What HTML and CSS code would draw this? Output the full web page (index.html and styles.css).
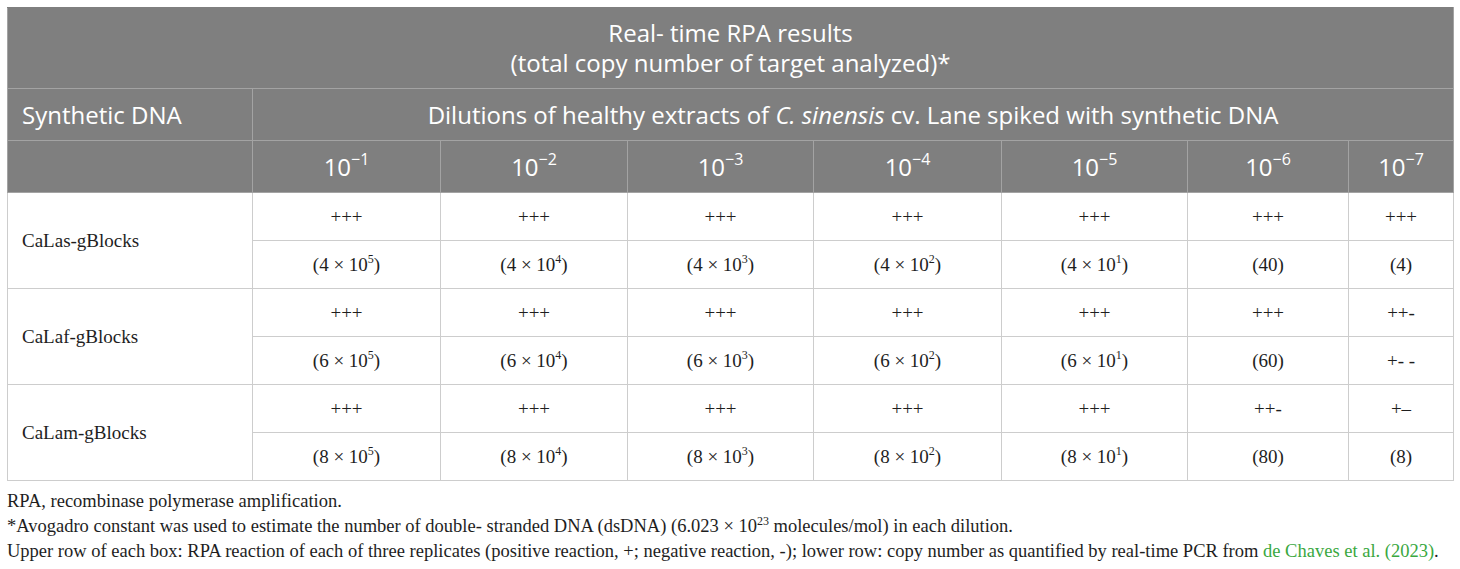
FILE: index.html
```html
<!DOCTYPE html>
<html lang="en">
<head>
  <meta charset="UTF-8">
  <meta name="viewport" content="width=device-width, initial-scale=1.0">
  <title>Real-time RPA results</title>

  <link rel="stylesheet" href="styles.css">
</head>
<body>
  <div class="wrap">
    <table class="results">
      <colgroup>
        <col class="c-name">
        <col class="c-1">
        <col class="c-2">
        <col class="c-3">
        <col class="c-4">
        <col class="c-5">
        <col class="c-6">
        <col class="c-7">
      </colgroup>
      <thead>
        <tr class="row-title">
          <th colspan="8">Real- time RPA results<br>(total copy number of target analyzed)*</th>
        </tr>
        <tr class="row-head">
          <th class="left">Synthetic DNA</th>
          <th colspan="7">Dilutions of healthy extracts of <i>C. sinensis</i> cv. Lane spiked with synthetic DNA</th>
        </tr>
        <tr class="row-head">
          <th></th>
          <th>10<sup>&minus;1</sup></th>
          <th>10<sup>&minus;2</sup></th>
          <th>10<sup>&minus;3</sup></th>
          <th>10<sup>&minus;4</sup></th>
          <th>10<sup>&minus;5</sup></th>
          <th>10<sup>&minus;6</sup></th>
          <th>10<sup>&minus;7</sup></th>
        </tr>
      </thead>
      <tbody>
        <tr class="upper">
          <td class="name" rowspan="2">CaLas-gBlocks</td>
          <td>+++</td><td>+++</td><td>+++</td><td>+++</td><td>+++</td><td>+++</td><td>+++</td>
        </tr>
        <tr class="lower">
          <td>(4 &times; 10<sup>5</sup>)</td>
          <td>(4 &times; 10<sup>4</sup>)</td>
          <td>(4 &times; 10<sup>3</sup>)</td>
          <td>(4 &times; 10<sup>2</sup>)</td>
          <td>(4 &times; 10<sup>1</sup>)</td>
          <td>(40)</td>
          <td>(4)</td>
        </tr>
        <tr class="upper">
          <td class="name" rowspan="2">CaLaf-gBlocks</td>
          <td>+++</td><td>+++</td><td>+++</td><td>+++</td><td>+++</td><td>+++</td><td>++-</td>
        </tr>
        <tr class="lower">
          <td>(6 &times; 10<sup>5</sup>)</td>
          <td>(6 &times; 10<sup>4</sup>)</td>
          <td>(6 &times; 10<sup>3</sup>)</td>
          <td>(6 &times; 10<sup>2</sup>)</td>
          <td>(6 &times; 10<sup>1</sup>)</td>
          <td>(60)</td>
          <td>+- -</td>
        </tr>
        <tr class="upper">
          <td class="name" rowspan="2">CaLam-gBlocks</td>
          <td>+++</td><td>+++</td><td>+++</td><td>+++</td><td>+++</td><td>++-</td><td>+&ndash;</td>
        </tr>
        <tr class="lower">
          <td>(8 &times; 10<sup>5</sup>)</td>
          <td>(8 &times; 10<sup>4</sup>)</td>
          <td>(8 &times; 10<sup>3</sup>)</td>
          <td>(8 &times; 10<sup>2</sup>)</td>
          <td>(8 &times; 10<sup>1</sup>)</td>
          <td>(80)</td>
          <td>(8)</td>
        </tr>
      </tbody>
    </table>

    <div class="notes">
      <p>RPA, recombinase polymerase amplification.</p>
      <p>*Avogadro constant was used to estimate the number of double- stranded DNA (dsDNA) (6.023 &times; 10<sup>23</sup> molecules/mol) in each dilution.</p>
      <p>Upper row of each box: RPA reaction of each of three replicates (positive reaction, +; negative reaction, -); lower row: copy number as quantified by real-time PCR from <a href="#">de Chaves et al. (2023)</a>.</p>
    </div>
  </div>
</body>
</html>
```

FILE: styles.css
```css
* {
  box-sizing: border-box;
  padding: 0;
  margin: 0;
}

body {
  background-color: white;
  font-family: 'Liberation Serif', 'Times New Roman', serif;
  color: #1e1e1e;
}

.wrap {
  padding: 7px;
}

.results {
  width: 1446px;
  border-collapse: collapse;
  table-layout: fixed;
}

.c-name { width: 245px; }
.c-1 { width: 188px; }
.c-2 { width: 187px; }
.c-3 { width: 186px; }
.c-4 { width: 188px; }
.c-5 { width: 186px; }
.c-6 { width: 161px; }
.c-7 { width: 105px; }

thead th {
  background-color: #7f7f7f;
  color: white;
  font-family: 'Open Sans', 'Noto Sans', sans-serif;
  font-weight: normal;
  font-size: 24px;
  border: 1px solid #a3a3a3;
  text-align: center;
}

thead th i {
  font-style: italic;
}

.row-title th {
  height: 81px;
  line-height: 30px;
  border-top-color: #7f7f7f;
}

.row-head th {
  height: 52px;
}

th.left {
  text-align: left;
  padding-left: 14px;
}

thead sup {
  font-size: 16px;
  vertical-align: 11px;
  line-height: 0;
}

tbody td {
  border: 1px solid #cdcdcd;
  font-size: 19px;
  text-align: center;
  height: 48px;
}

tbody td.name {
  text-align: left;
  padding-left: 14px;
}

tbody sup {
  font-size: 12px;
  vertical-align: 8px;
  line-height: 0;
}

.notes {
  padding-top: 8px;
  font-size: 18.5px;
  line-height: 25px;
  white-space: nowrap;
}

.notes sup {
  font-size: 12px;
  vertical-align: 7px;
  line-height: 0;
}

.notes a {
  color: #3aa83f;
  text-decoration: none;
}
```
